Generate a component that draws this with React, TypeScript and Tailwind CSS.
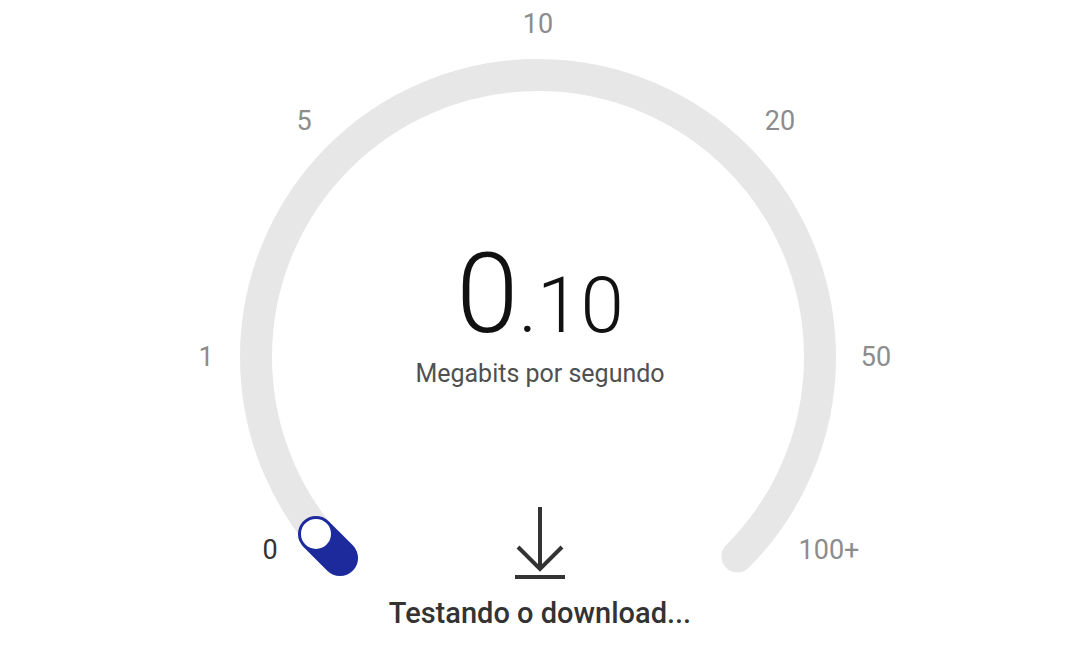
import React from "react";

const labels: { t: string; x: number; y: number; dark?: boolean }[] = [
  { t: "10", x: 538, y: 24 },
  { t: "5", x: 304, y: 121 },
  { t: "20", x: 780, y: 121 },
  { t: "1", x: 206, y: 357 },
  { t: "50", x: 876, y: 357 },
  { t: "0", x: 270, y: 550, dark: true },
  { t: "100+", x: 829, y: 550 },
];

export default function App() {
  const cx = 538;
  const cy = 357;
  const r = 282;
  const d = r * Math.SQRT1_2;
  const arc = `M ${cx - d} ${cy + d} A ${r} ${r} 0 1 1 ${cx + d} ${cy + d}`;
  return (
    <div
      className="relative w-full h-[656px] bg-white overflow-hidden"
      style={{ fontFamily: "Roboto, 'Noto Sans', Arial, sans-serif" }}
    >
      <svg className="absolute inset-0" width="1080" height="656" viewBox="0 0 1080 656">
        <path d={arc} fill="none" stroke="#e7e7e7" strokeWidth="32" strokeLinecap="round" />
        <g transform="translate(328 546) rotate(45)">
          <rect x="-35" y="-18" width="70" height="36" rx="18" fill="#1c2a9c" />
          <circle cx="-17" cy="0" r="15" fill="#ffffff" />
        </g>
      </svg>

      {labels.map((l) => (
        <div
          key={l.t}
          className={`absolute -translate-x-1/2 -translate-y-1/2 text-[27px] leading-none ${
            l.dark ? "text-[#333333]" : "text-[#8c8c8c]"
          }`}
          style={{ left: l.x, top: l.y }}
        >
          {l.t}
        </div>
      ))}

      <div className="relative flex flex-col items-center pt-[238px]">
        <div className="flex items-baseline text-[#111111] font-light leading-none">
          <span className="text-[112px] leading-none">0</span>
          <span className="text-[78px] leading-none">.10</span>
        </div>
        <div className="mt-[11px] text-[25px] leading-none text-[#505050]">Megabits por segundo</div>
        <svg className="mt-[117px]" width="60" height="78" viewBox="0 0 60 78">
          <line x1="30" y1="4" x2="30" y2="64" stroke="#333" strokeWidth="4" />
          <polyline points="8,44 30,66 52,44" fill="none" stroke="#333" strokeWidth="4" />
          <line x1="5" y1="74" x2="55" y2="74" stroke="#333" strokeWidth="4" />
        </svg>
        <div className="mt-[18px] text-[29px] leading-none font-medium text-[#333333]">
          Testando o download...
        </div>
      </div>
    </div>
  );
}
